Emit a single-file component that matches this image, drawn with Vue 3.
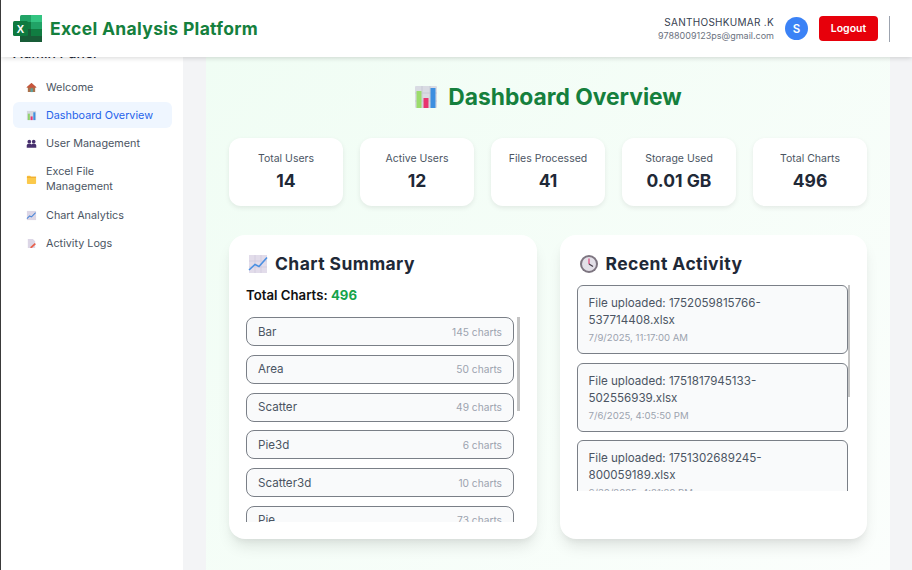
<template>
  <div class="page">
    <header class="topbar">
      <div class="brand">
        <svg class="logo" width="30" height="28" viewBox="0 0 30 28">
          <rect x="7" y="0" width="22" height="27" rx="1.5" fill="#21a366" />
          <rect x="18" y="0" width="11" height="7" fill="#33c481" />
          <rect x="7" y="7" width="11" height="7" fill="#107c41" />
          <rect x="18" y="7" width="11" height="7" fill="#21a366" />
          <rect x="7" y="14" width="11" height="7" fill="#185c37" />
          <rect x="18" y="14" width="11" height="7" fill="#107c41" />
          <rect x="7" y="21" width="22" height="6" fill="#185c37" />
          <rect x="0" y="6" width="15" height="15" rx="1.5" fill="#0e7a3f" />
          <text x="7.5" y="17.5" class="logo-x">X</text>
        </svg>
        <span class="brand-name">Excel Analysis Platform</span>
      </div>
      <div class="account">
        <div class="who">
          <div class="who-name">SANTHOSHKUMAR .K</div>
          <div class="who-mail">9788009123ps@gmail.com</div>
        </div>
        <div class="avatar">S</div>
        <button class="logout" type="button">Logout</button>
        <span class="divider"></span>
      </div>
    </header>

    <div class="body">
      <aside class="sidebar">
        <div class="side-title">Admin Panel</div>
        <nav class="side-nav">
          <a v-for="item in navItems" :key="item.label" class="nav-item" :class="{ active: item.active }">
            <span class="nav-icon">
              <svg width="11" height="11" viewBox="0 0 12 12">
                <template v-if="item.icon === 'house'">
                  <path d="M6 1 L11.5 6 H10 V11 H2 V6 H0.5 Z" fill="#a9714b" />
                  <path d="M6 1 L11.5 6 H0.5 Z" fill="#c8553d" />
                  <rect x="5" y="7" width="2.4" height="4" fill="#5ba4a4" />
                </template>
                <template v-else-if="item.icon === 'bars'">
                  <rect x="1" y="1" width="10" height="10" fill="#d5d8e0" />
                  <rect x="2" y="4" width="2.2" height="7" fill="#8fd36b" />
                  <rect x="5" y="7" width="2.2" height="4" fill="#e8346f" />
                  <rect x="8" y="2.5" width="2.2" height="8.5" fill="#3d8fe0" />
                </template>
                <template v-else-if="item.icon === 'users'">
                  <circle cx="3.6" cy="4" r="2" fill="#47306e" />
                  <circle cx="8.4" cy="4" r="2" fill="#47306e" />
                  <path d="M0.8 10.5 V8 Q0.8 6.3 3 6.3 H4.4 Q5.6 6.3 6 7 Q6.4 6.3 7.6 6.3 H9 Q11.2 6.3 11.2 8 V10.5 Z" fill="#47306e" />
                </template>
                <template v-else-if="item.icon === 'folder'">
                  <path d="M1 3 Q1 2 2 2 H4.5 L5.6 3.2 H10 Q11 3.2 11 4.2 V10 Q11 10.8 10 10.8 H2 Q1 10.8 1 10 Z" fill="#fbc94b" />
                  <rect x="1" y="2.8" width="10" height="1.4" fill="#f0ae2e" />
                </template>
                <template v-else-if="item.icon === 'chart'">
                  <rect x="1" y="1" width="10" height="10" fill="#dcd6e6" />
                  <path d="M1 9.5 L4 6.5 L6 7.5 L10.5 2.8" fill="none" stroke="#4a86d8" stroke-width="1.1" />
                </template>
                <template v-else>
                  <path d="M2 1 H7.5 L10 3.5 V11 H2 Z" fill="#dcd6e6" />
                  <path d="M5 9.5 L9.5 5.5 L10.8 6.8 L6.4 10.8 L4.6 11 Z" fill="#e9604a" />
                </template>
              </svg>
            </span>
            <span class="nav-label">{{ item.label }}</span>
          </a>
        </nav>
      </aside>

      <main class="main">
        <section class="panel">
          <h1 class="title">
            <svg width="24" height="24" viewBox="0 0 24 24">
              <rect x="1" y="1" width="22" height="22" rx="1" fill="#d9dbe3" />
              <path d="M8 1 V23 M16 1 V23 M1 8 H23 M1 16 H23" stroke="#c3c6d2" stroke-width="0.8" />
              <rect x="2.5" y="6" width="5" height="17" fill="#9bdc6c" />
              <rect x="9.5" y="13" width="5" height="10" fill="#e8346f" />
              <rect x="16.5" y="3" width="5" height="20" fill="#3d8fe0" />
            </svg>
            <span>Dashboard Overview</span>
          </h1>

          <div class="stats">
            <div v-for="stat in stats" :key="stat.label" class="stat">
              <div class="stat-label">{{ stat.label }}</div>
              <div class="stat-value">{{ stat.value }}</div>
            </div>
          </div>

          <div class="cards">
            <div class="card">
              <h2 class="card-title">
                <svg width="20" height="20" viewBox="0 0 20 20">
                  <rect x="1" y="1" width="18" height="18" fill="#e2dcea" />
                  <path d="M7 1 V19 M13 1 V19 M1 7 H19 M1 13 H19" stroke="#cfc8dc" stroke-width="0.7" />
                  <path d="M1 16 L7 10.5 L11 12.5 L19 3.5" fill="none" stroke="#4a90e2" stroke-width="1.6" />
                </svg>
                <span>Chart Summary</span>
              </h2>
              <div class="total">Total Charts: <span class="total-num">496</span></div>
              <div class="list chart-list">
                <div v-for="row in chartRows" :key="row.name" class="chart-row">
                  <span class="chart-name">{{ row.name }}</span>
                  <span class="chart-count">{{ row.count }} charts</span>
                </div>
                <span class="thumb chart-thumb"></span>
              </div>
            </div>

            <div class="card">
              <h2 class="card-title">
                <svg width="20" height="20" viewBox="0 0 20 20">
                  <circle cx="10" cy="10" r="9" fill="#7d7580" />
                  <circle cx="10" cy="10" r="7" fill="#e3e0e8" />
                  <path d="M10 4.5 V10" stroke="#e0457b" stroke-width="1.2" />
                  <path d="M10 10 L14 12.5" stroke="#47404c" stroke-width="1.3" />
                </svg>
                <span>Recent Activity</span>
              </h2>
              <div class="list activity-list">
                <div v-for="log in activity" :key="log.file" class="activity-row">
                  <div class="activity-text">File uploaded: {{ log.file }}</div>
                  <div class="activity-time">{{ log.time }}</div>
                </div>
                <span class="thumb activity-thumb"></span>
              </div>
            </div>
          </div>
        </section>
      </main>
    </div>
  </div>
</template>

<script setup>
const navItems = [
  { label: 'Welcome', icon: 'house' },
  { label: 'Dashboard Overview', icon: 'bars', active: true },
  { label: 'User Management', icon: 'users' },
  { label: 'Excel File Management', icon: 'folder' },
  { label: 'Chart Analytics', icon: 'chart' },
  { label: 'Activity Logs', icon: 'logs' }
]

const stats = [
  { label: 'Total Users', value: '14' },
  { label: 'Active Users', value: '12' },
  { label: 'Files Processed', value: '41' },
  { label: 'Storage Used', value: '0.01 GB' },
  { label: 'Total Charts', value: '496' }
]

const chartRows = [
  { name: 'Bar', count: 145 },
  { name: 'Area', count: 50 },
  { name: 'Scatter', count: 49 },
  { name: 'Pie3d', count: 6 },
  { name: 'Scatter3d', count: 10 },
  { name: 'Pie', count: 73 }
]

const activity = [
  { file: '1752059815766-537714408.xlsx', time: '7/9/2025, 11:17:00 AM' },
  { file: '1751817945133-502556939.xlsx', time: '7/6/2025, 4:05:50 PM' },
  { file: '1751302689245-800059189.xlsx', time: '6/30/2025, 4:21:29 PM' }
]
</script>

<style>
html, body {
  margin: 0;
  height: 100%;
  overflow: hidden;
}
</style>

<style scoped>
.page {
  height: 570px;
  display: flex;
  flex-direction: column;
  overflow: hidden;
  font-family: Inter, "Liberation Sans", sans-serif;
  background: #f3f4f6;
  color: #1f2937;
  border-left: 1px solid #3a3a3a;
  box-sizing: border-box;
}

.topbar {
  flex: 0 0 57px;
  display: flex;
  align-items: center;
  justify-content: space-between;
  padding: 0 22px 0 12px;
  background: #fff;
  box-shadow: 0 1px 5px rgba(0, 0, 0, 0.16);
  position: relative;
  z-index: 2;
}

.brand {
  display: flex;
  align-items: center;
  gap: 7px;
}

.logo-x {
  font-family: "Liberation Sans", sans-serif;
  font-size: 11px;
  font-weight: 700;
  fill: #fff;
  text-anchor: middle;
}

.brand-name {
  font-size: 17.5px;
  font-weight: 700;
  color: #15803d;
  letter-spacing: 0.32px;
}

.account {
  display: flex;
  align-items: center;
}

.who {
  text-align: right;
  margin-right: 11px;
}

.who-name {
  font-size: 10px;
  line-height: 14px;
  font-weight: 400;
  color: #374151;
  letter-spacing: 0.28px;
}

.who-mail {
  font-size: 9px;
  line-height: 13px;
  color: #6b7280;
}

.avatar {
  width: 23px;
  height: 23px;
  border-radius: 50%;
  background: #3b82f6;
  color: #fff;
  font-size: 11.5px;
  font-weight: 600;
  display: flex;
  align-items: center;
  justify-content: center;
}

.logout {
  margin-left: 11px;
  width: 59px;
  height: 25px;
  border: none;
  border-radius: 4px;
  background: #e7000b;
  color: #fff;
  font-family: inherit;
  font-size: 10.5px;
  font-weight: 600;
  padding: 0;
}

.divider {
  width: 1px;
  height: 26px;
  margin-left: 11px;
  background: #9ca3af;
}

.body {
  flex: 1;
  min-height: 0;
  display: flex;
}

.sidebar {
  flex: 0 0 182px;
  background: #fff;
  padding: 0 11px 0 12px;
  box-sizing: border-box;
  overflow: hidden;
}

.side-title {
  margin-top: -14px;
  font-size: 14px;
  line-height: 20px;
  font-weight: 500;
  color: #1f2937;
}

.side-nav {
  margin-top: 11px;
  display: flex;
  flex-direction: column;
  gap: 2.3px;
}

.nav-item {
  display: flex;
  align-items: center;
  gap: 9px;
  padding: 5.5px 13px;
  border-radius: 6px;
  font-size: 10.8px;
  line-height: 15px;
  color: #4b5563;
}

.nav-item.active {
  background: #eff6ff;
  color: #2563eb;
}

.nav-icon {
  flex: 0 0 11px;
  display: flex;
}

.main {
  flex: 1;
  min-width: 0;
  padding: 0 22px 0 23px;
}

.panel {
  height: 100%;
  box-sizing: border-box;
  padding: 0 23px;
  background: linear-gradient(135deg, #f0fdf4, #fbfefc);
  overflow: hidden;
}

.title {
  margin: 24px 0 25px;
  display: flex;
  align-items: center;
  justify-content: center;
  gap: 10px;
  font-size: 22.8px;
  line-height: 32px;
  font-weight: 700;
  color: #15803d;
}

.stats {
  display: grid;
  grid-template-columns: repeat(5, 1fr);
  gap: 17px;
}

.stat {
  height: 68px;
  box-sizing: border-box;
  padding-top: 14px;
  background: #fff;
  border-radius: 12px;
  box-shadow: 0 2px 5px rgba(0, 0, 0, 0.08);
  text-align: center;
}

.stat-label {
  font-size: 10.5px;
  line-height: 14px;
  color: #4b5563;
}

.stat-value {
  margin-top: 3px;
  font-size: 17.5px;
  line-height: 24px;
  font-weight: 700;
  color: #1f2937;
}

.cards {
  margin-top: 29px;
  display: grid;
  grid-template-columns: 1fr 1fr;
  gap: 23px;
}

.card {
  height: 304px;
  box-sizing: border-box;
  padding: 17px 17px 0;
  background: #fff;
  border-radius: 16px;
  box-shadow: 0 10px 15px -3px rgba(0, 0, 0, 0.1), 0 4px 6px -2px rgba(0, 0, 0, 0.05);
}

.card-title {
  margin: 0;
  display: flex;
  align-items: center;
  gap: 7px;
  padding-left: 2px;
  font-size: 17.5px;
  line-height: 24px;
  font-weight: 700;
  color: #1f2937;
  letter-spacing: 0.42px;
}

.total {
  margin-top: 10px;
  font-size: 13.2px;
  line-height: 18px;
  font-weight: 600;
  color: #111;
}

.total-num {
  color: #16a34a;
  font-weight: 700;
}

.list {
  position: relative;
  overflow: hidden;
}

.chart-list {
  margin-top: 13px;
  height: 205px;
  display: flex;
  flex-direction: column;
  gap: 8.8px;
}

.chart-row {
  flex: 0 0 29px;
  width: 268px;
  box-sizing: border-box;
  display: flex;
  align-items: center;
  justify-content: space-between;
  padding: 0 11px;
  background: #f9fafb;
  border: 1px solid #7a7f87;
  border-radius: 8px;
}

.chart-name {
  font-size: 11.6px;
  color: #4b5563;
}

.chart-count {
  font-size: 10.2px;
  color: #9ca3af;
}

.thumb {
  position: absolute;
  background: #c4c4c4;
}

.chart-thumb {
  left: 271px;
  top: 0;
  width: 3px;
  height: 94px;
}

.activity-list {
  margin-top: 9px;
  height: 206px;
  display: flex;
  flex-direction: column;
  gap: 8.5px;
}

.activity-row {
  flex: 0 0 auto;
  width: 271px;
  box-sizing: border-box;
  padding: 9px 11px 8px;
  background: #f9fafb;
  border: 1px solid #7a7f87;
  border-radius: 6px;
}

.activity-text {
  width: 190px;
  font-size: 11.6px;
  line-height: 17px;
  color: #4b5563;
}

.activity-time {
  margin-top: 2px;
  font-size: 9.6px;
  line-height: 14px;
  color: #9ca3af;
}

.activity-thumb {
  left: 271px;
  top: 0;
  width: 3px;
  height: 112px;
}
</style>
